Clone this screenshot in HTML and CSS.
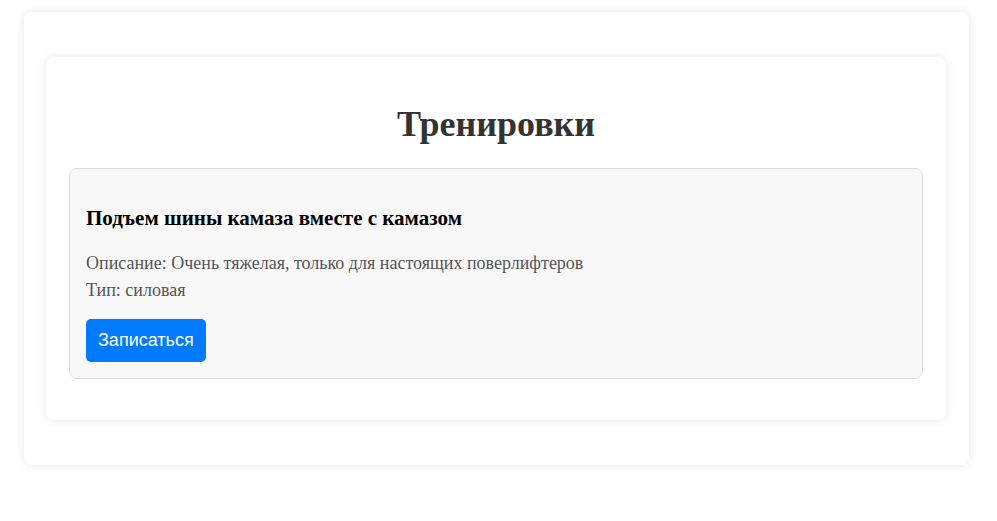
FILE: index.html
```html
<!DOCTYPE html>
<html lang="ru">
<head>
<meta charset="utf-8">
<title>Тренировки</title>
<link rel="stylesheet" href="styles.css">
</head>
<body>
<div class="outer">
  <div class="panel">
    <h1 class="page-title">Тренировки</h1>
    <div class="card">
      <h3 class="card-title">Подъем шины камаза вместе с камазом</h3>
      <p class="card-text">Описание: Очень тяжелая, только для настоящих пoверлифтеров</p>
      <p class="card-text">Тип: силовая</p>
      <button class="btn">Записаться</button>
    </div>
  </div>
</div>
</body>
</html>
```
FILE: styles.css
```css
html, body {
  margin: 0;
  padding: 0;
  background: #fff;
  font-family: "Liberation Serif", "Times New Roman", serif;
  font-size: 18px;
}
body {
  padding: 12px 28px 40px 24px;
}
.outer {
  background: #fff;
  border-radius: 8px;
  box-shadow: 0 0 10px rgba(0, 0, 0, 0.1);
  padding: 45px 23px 45px 22px;
}
.panel {
  background: #fff;
  border-radius: 8px;
  box-shadow: 0 0 10px rgba(0, 0, 0, 0.1);
  padding: 23px 23px 41px 23px;
}
.page-title {
  margin: 24px 0 23px;
  text-align: center;
  font-size: 36px;
  color: #333;
  line-height: 41px;
}
.card {
  background: #f8f8f8;
  border: 1px solid #ddd;
  border-radius: 8px;
  padding: 16px;
}
.card-title {
  margin: 21px 0 23px;
  font-size: 21px;
  line-height: 24px;
  color: #000;
}
.card-text {
  margin: 6px 0;
  font-size: 18px;
  line-height: 21px;
  color: #555;
}
.btn {
  display: block;
  margin-top: 18px;
  background: #007bff;
  color: #fff;
  border: none;
  border-radius: 5px;
  padding: 11px 12px;
  font-family: "Liberation Sans", Arial, sans-serif;
  font-size: 18px;
  line-height: 21px;
  cursor: pointer;
}
```
